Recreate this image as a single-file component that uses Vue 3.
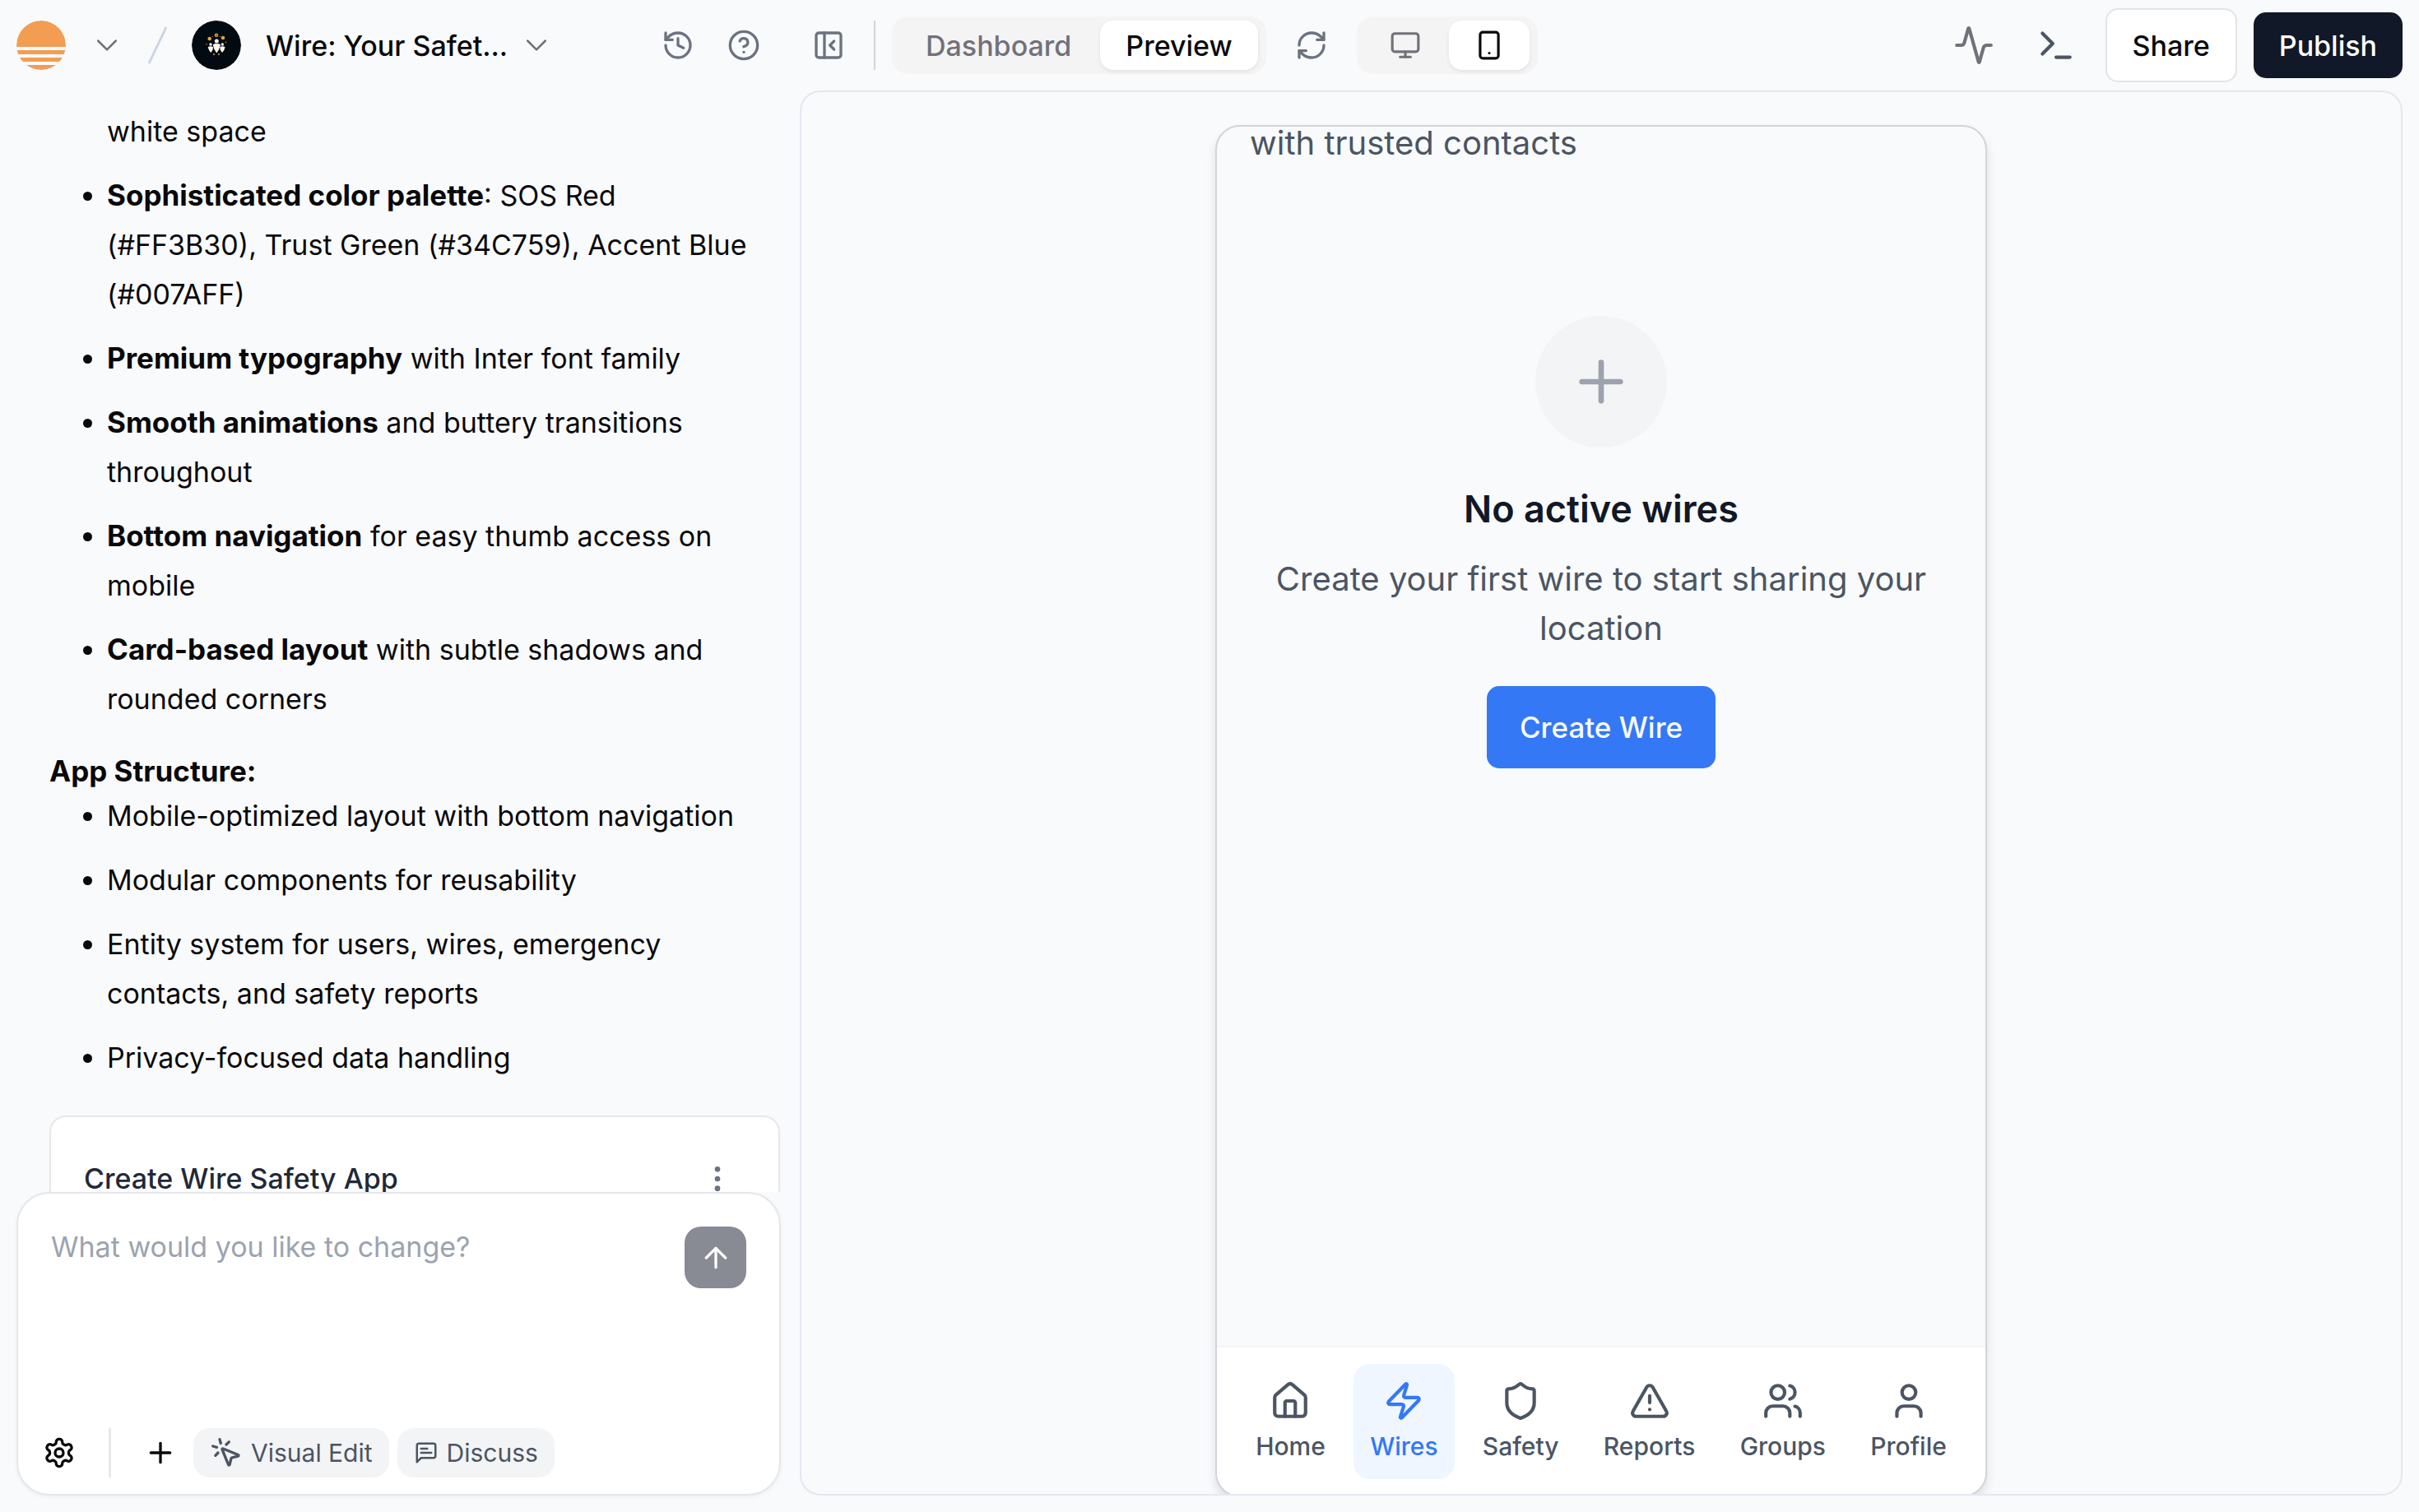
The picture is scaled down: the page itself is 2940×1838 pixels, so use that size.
<script setup>
const features = [
  { title: 'Sophisticated color palette', text: ': SOS Red (#FF3B30), Trust Green (#34C759), Accent Blue (#007AFF)' },
  { title: 'Premium typography', text: ' with Inter font family' },
  { title: 'Smooth animations', text: ' and buttery transitions throughout' },
  { title: 'Bottom navigation', text: ' for easy thumb access on mobile' },
  { title: 'Card-based layout', text: ' with subtle shadows and rounded corners' },
]

const structure = [
  'Mobile-optimized layout with bottom navigation',
  'Modular components for reusability',
  'Entity system for users, wires, emergency contacts, and safety reports',
  'Privacy-focused data handling',
]

const tabs = [
  {
    label: 'Home',
    paths: [
      'M15 21v-8a1 1 0 0 0-1-1h-4a1 1 0 0 0-1 1v8',
      'M3 10a2 2 0 0 1 .709-1.528l7-5.999a2 2 0 0 1 2.582 0l7 5.999A2 2 0 0 1 21 10v9a2 2 0 0 1-2 2H5a2 2 0 0 1-2-2z',
    ],
  },
  {
    label: 'Wires',
    active: true,
    paths: [
      'M4 14a1 1 0 0 1-.78-1.63l9.9-10.2a.5.5 0 0 1 .86.46l-1.92 6.02A1 1 0 0 0 13 10h7a1 1 0 0 1 .78 1.63l-9.9 10.2a.5.5 0 0 1-.86-.46l1.92-6.02A1 1 0 0 0 11 14z',
    ],
  },
  {
    label: 'Safety',
    paths: [
      'M20 13c0 5-3.5 7.5-7.66 8.95a1 1 0 0 1-.67-.01C7.5 20.5 4 18 4 13V6a1 1 0 0 1 1-1c2 0 4.5-1.2 6.24-2.72a1.17 1.17 0 0 1 1.52 0C14.51 3.81 17 5 19 5a1 1 0 0 1 1 1z',
    ],
  },
  {
    label: 'Reports',
    paths: [
      'm21.73 18-8-14a2 2 0 0 0-3.48 0l-8 14A2 2 0 0 0 4 21h16a2 2 0 0 0 1.73-3',
      'M12 9v4',
      'M12 17h.01',
    ],
  },
  {
    label: 'Groups',
    paths: [
      'M16 21v-2a4 4 0 0 0-4-4H6a4 4 0 0 0-4 4v2',
      'M13 7a4 4 0 1 1-8 0 4 4 0 0 1 8 0',
      'M22 21v-2a4 4 0 0 0-3-3.87',
      'M16 3.13a4 4 0 0 1 0 7.75',
    ],
  },
  {
    label: 'Profile',
    paths: ['M19 21v-2a4 4 0 0 0-4-4H9a4 4 0 0 0-4 4v2', 'M16 7a4 4 0 1 1-8 0 4 4 0 0 1 8 0'],
  },
]
</script>

<template>
  <div class="app">
    <aside class="sidebar">
      <header class="sidebar-head">
        <button class="plain" aria-label="Workspace">
          <svg class="logo" viewBox="0 0 60 60">
            <circle cx="30" cy="30" r="30" fill="#f29d52" />
            <rect x="0" y="32" width="60" height="4" fill="#f9fafc" />
            <rect x="0" y="41" width="60" height="4" fill="#f9fafc" />
            <rect x="0" y="50" width="60" height="4" fill="#f9fafc" />
          </svg>
        </button>
        <button class="plain" aria-label="Switch workspace">
          <svg class="icon" viewBox="0 0 24 24"><path d="M5.5 8.7 12 15.2l6.5-6.5" /></svg>
        </button>
        <svg class="slash" viewBox="0 0 24 48"><path d="M1 47 23 1" /></svg>
        <svg class="avatar" viewBox="0 0 60 60">
          <circle cx="30" cy="30" r="30" fill="#020b12" />
          <circle cx="30" cy="17.7" r="1.5" fill="none" stroke="#e8a13c" stroke-width="1.5" />
          <g fill="#e8a13c">
            <circle cx="21.7" cy="22" r="2.3" />
            <circle cx="38" cy="21" r="2.3" />
            <circle cx="27" cy="41" r="1" />
            <circle cx="33" cy="41" r="1" />
            <circle cx="18" cy="28.7" r=".7" />
            <circle cx="41.7" cy="26.3" r=".7" />
            <circle cx="25.5" cy="19.5" r=".6" />
            <circle cx="34.5" cy="19.5" r=".6" />
          </g>
          <g fill="#fdf8ee">
            <circle cx="30.3" cy="25" r="2.5" />
            <path d="M25.7 29.5q2.3-2 4.6-1.3 2.3-.7 4.7 1.3l-1.8 5.5-2.9 4.5-2.9-4.5z" />
            <circle cx="23" cy="29" r="1.7" />
            <path d="M19.7 32.3q3.3-2 6.3 0l-.5 3.5-2.2 3.2-2.3-3z" />
            <circle cx="37.3" cy="29" r="1.7" />
            <path d="M34.3 32.3q3-2 6.3 0l-1.3 3.7-2.3 3-2.2-3.2z" />
          </g>
        </svg>
        <button class="plain title">
          Wire: Your Safet...
          <svg class="icon title-chevron" viewBox="0 0 24 24"><path d="M5.5 8.7 12 15.2l6.5-6.5" /></svg>
        </button>
        <div class="head-actions">
          <button class="plain" aria-label="History">
            <svg class="icon" viewBox="0 0 24 24">
              <path d="M3 12a9 9 0 1 0 9-9 9.75 9.75 0 0 0-6.74 2.74L3 8" />
              <path d="M3 3v5h5" />
              <path d="M12 7v5l4 2" />
            </svg>
          </button>
          <button class="plain" aria-label="Help">
            <svg class="icon" viewBox="0 0 24 24">
              <circle cx="12" cy="12" r="10" />
              <path d="M9.09 9a3 3 0 0 1 5.83 1c0 2-3 3-3 3" />
              <path d="M12 17h.01" />
            </svg>
          </button>
        </div>
      </header>

      <section class="chat">
        <ul>
          <li class="continued">white space</li>
          <li v-for="f in features" :key="f.title"><strong>{{ f.title }}</strong>{{ f.text }}</li>
        </ul>
        <p class="chat-heading">App Structure:</p>
        <ul>
          <li v-for="s in structure" :key="s">{{ s }}</li>
        </ul>
        <article class="card">
          <h2>Create Wire Safety App</h2>
          <button class="plain" aria-label="More options">
            <svg class="icon dots" viewBox="0 0 24 24">
              <circle cx="12" cy="12" r="1" />
              <circle cx="12" cy="5" r="1" />
              <circle cx="12" cy="19" r="1" />
            </svg>
          </button>
        </article>
      </section>

      <form class="composer" @submit.prevent>
        <div class="composer-input">
          <textarea aria-label="Message" placeholder="What would you like to change?"></textarea>
          <button class="send" aria-label="Send">
            <svg class="icon" viewBox="0 0 24 24"><path d="m5 12 7-7 7 7" /><path d="M12 19V5" /></svg>
          </button>
        </div>
        <div class="composer-tools">
          <button class="plain" type="button" aria-label="Settings">
            <svg class="icon dark" viewBox="0 0 24 24">
              <path d="M12.22 2h-.44a2 2 0 0 0-2 2v.18a2 2 0 0 1-1 1.73l-.43.25a2 2 0 0 1-2 0l-.15-.08a2 2 0 0 0-2.73.73l-.22.38a2 2 0 0 0 .73 2.73l.15.1a2 2 0 0 1 1 1.72v.51a2 2 0 0 1-1 1.74l-.15.09a2 2 0 0 0-.73 2.73l.22.38a2 2 0 0 0 2.73.73l.15-.08a2 2 0 0 1 2 0l.43.25a2 2 0 0 1 1 1.73V20a2 2 0 0 0 2 2h.44a2 2 0 0 0 2-2v-.18a2 2 0 0 1 1-1.73l.43-.25a2 2 0 0 1 2 0l.15.08a2 2 0 0 0 2.73-.73l.22-.39a2 2 0 0 0-.73-2.73l-.15-.08a2 2 0 0 1-1-1.74v-.5a2 2 0 0 1 1-1.74l.15-.09a2 2 0 0 0 .73-2.73l-.22-.38a2 2 0 0 0-2.73-.73l-.15.08a2 2 0 0 1-2 0l-.43-.25a2 2 0 0 1-1-1.73V4a2 2 0 0 0-2-2z" />
              <circle cx="12" cy="12" r="3" />
            </svg>
          </button>
          <span class="tools-divider"></span>
          <button class="plain" type="button" aria-label="Add">
            <svg class="icon dark" viewBox="0 0 24 24"><path d="M5 12h14" /><path d="M12 5v14" /></svg>
          </button>
          <div class="chips">
            <button class="chip" type="button">
              <svg class="icon" viewBox="0 0 24 24">
                <path d="M14 4.1 12 6" />
                <path d="m5.1 8-2.9-.8" />
                <path d="m6 12-1.9 2" />
                <path d="M7.2 2.2 8 5.1" />
                <path d="M9.037 9.69a.498.498 0 0 1 .653-.653l11 4.5a.5.5 0 0 1-.074.949l-4.349 1.041a1 1 0 0 0-.74.739l-1.04 4.35a.5.5 0 0 1-.95.074z" />
              </svg>
              Visual Edit
            </button>
            <button class="chip" type="button">
              <svg class="icon small" viewBox="0 0 24 24">
                <path d="M21 15a2 2 0 0 1-2 2H7l-4 4V5a2 2 0 0 1 2-2h14a2 2 0 0 1 2 2z" />
                <path d="M13 8H7" />
                <path d="M17 12H7" />
              </svg>
              Discuss
            </button>
          </div>
        </div>
      </form>
    </aside>

    <main class="workspace">
      <header class="toolbar">
        <button class="plain" aria-label="Collapse sidebar">
          <svg class="icon" viewBox="0 0 24 24">
            <rect x="3" y="3" width="18" height="18" rx="2" />
            <path d="M9 3v18" />
            <path d="m16 15-3-3 3-3" />
          </svg>
        </button>
        <span class="bar-divider"></span>
        <div class="segment">
          <button class="segment-item">Dashboard</button>
          <button class="segment-item active">Preview</button>
        </div>
        <button class="plain refresh" aria-label="Refresh">
          <svg class="icon" viewBox="0 0 24 24">
            <path d="M3 12a9 9 0 0 1 9-9 9.75 9.75 0 0 1 6.74 2.74L21 8" />
            <path d="M21 3v5h-5" />
            <path d="M21 12a9 9 0 0 1-9 9 9.75 9.75 0 0 1-6.74-2.74L3 16" />
            <path d="M8 16H3v5" />
          </svg>
        </button>
        <div class="segment">
          <button class="segment-item device-item" aria-label="Desktop view">
            <svg class="icon device" viewBox="0 0 24 24">
              <rect x="2" y="3" width="20" height="14" rx="2" />
              <path d="M8 21h8" />
              <path d="M12 17v4" />
            </svg>
          </button>
          <button class="segment-item device-item active" aria-label="Mobile view">
            <svg class="icon device" viewBox="0 0 24 24">
              <rect x="5" y="2" width="14" height="20" rx="2" />
              <path d="M12 18h.01" />
            </svg>
          </button>
        </div>
        <div class="toolbar-end">
          <button class="plain" aria-label="Activity">
            <svg class="icon large zinc" viewBox="0 0 24 24">
              <path d="M22 12h-2.48a2 2 0 0 0-1.93 1.46l-2.35 8.36a.25.25 0 0 1-.48 0L9.24 2.18a.25.25 0 0 0-.48 0l-2.35 8.36A2 2 0 0 1 4.49 12H2" />
            </svg>
          </button>
          <button class="plain terminal" aria-label="Console">
            <svg class="icon large slate" viewBox="0 0 24 24"><path d="m4 17 6-6-6-6" /><path d="M12 19h8" /></svg>
          </button>
          <button class="share">Share</button>
          <button class="publish">Publish</button>
        </div>
      </header>

      <section class="stage">
        <div class="phone">
          <div class="phone-body">
            <p class="phone-sub">with trusted contacts</p>
            <div class="empty">
              <span class="empty-badge">
                <svg class="icon" viewBox="0 0 24 24"><path d="M5 12h14" /><path d="M12 5v14" /></svg>
              </span>
              <h3>No active wires</h3>
              <p>Create your first wire to start sharing your location</p>
              <button class="create">Create Wire</button>
            </div>
          </div>
          <nav class="tabs">
            <a v-for="t in tabs" :key="t.label" href="#" class="tab" :class="{ active: t.active }">
              <svg class="icon large" viewBox="0 0 24 24">
                <path v-for="d in t.paths" :key="d" :d="d" />
              </svg>
              {{ t.label }}
            </a>
          </nav>
        </div>
      </section>
    </main>
  </div>
</template>

<style>
body {
  margin: 0;
  background: #f9fafc;
}
</style>

<style scoped>
.app,
.app * {
  box-sizing: border-box;
}

.app {
  display: flex;
  height: 100vh;
  overflow: hidden;
  background: #f9fafc;
  color: #09090b;
  font-family: Inter, "Liberation Sans", sans-serif;
  font-size: 34px;
}

button,
textarea {
  font: inherit;
  color: inherit;
  border: 0;
  padding: 0;
  background: none;
}

h2,
h3,
p,
ul {
  margin: 0;
  padding: 0;
}

.plain {
  display: flex;
  align-items: center;
  color: #6b7280;
}

.icon {
  display: block;
  flex: none;
  width: 40px;
  height: 40px;
  fill: none;
  stroke: currentColor;
  stroke-width: 2;
  stroke-linecap: round;
  stroke-linejoin: round;
}

.icon.small {
  width: 30px;
  height: 30px;
}

.icon.device {
  width: 38px;
  height: 38px;
}

.icon.large {
  width: 50px;
  height: 50px;
}

.icon.dark {
  color: #09090b;
}

.icon.zinc {
  color: #71717a;
}

.icon.slate {
  color: #4b5563;
}

/* Sidebar */
.sidebar {
  display: flex;
  flex-direction: column;
  flex: 0 0 972px;
  min-width: 0;
}

.sidebar-head {
  display: flex;
  flex: none;
  align-items: center;
  gap: 30px;
  height: 110px;
  padding: 0 48px 0 20px;
}

.sidebar-head > .plain > .icon,
.title-chevron {
  color: #71717a;
  stroke-width: 1.5;
}

.logo,
.avatar {
  display: block;
  width: 60px;
  height: 60px;
  border-radius: 50%;
}

.slash {
  width: 23px;
  height: 48px;
  fill: none;
  stroke: #cbd5e1;
  stroke-width: 3;
}

.title {
  gap: 15px;
  color: #09090b;
  font-weight: 500;
  white-space: nowrap;
}

.head-actions {
  display: flex;
  gap: 40px;
  margin-left: auto;
}

.chat {
  flex: 1;
  min-height: 0;
  overflow: hidden;
  padding: 20px 24px 0 60px;
}

.chat ul {
  padding: 0 20px 0 70px;
  list-style: disc;
}

.chat li {
  line-height: 60px;
}

.chat li + li {
  margin-top: 18px;
}

.chat .continued {
  list-style: none;
}

.chat strong,
.chat-heading {
  font-size: 35px;
  font-weight: 700;
  line-height: 50px;
}

.chat-heading {
  margin-top: 32px;
}

.card {
  display: flex;
  align-items: center;
  justify-content: space-between;
  margin-top: 40px;
  padding: 50px 54px 50px 40px;
  border: 2px solid #e5e7eb;
  border-radius: 20px;
  background: #fff;
}

.card h2 {
  color: #1f2937;
  font-size: 34px;
  font-weight: 500;
  line-height: 50px;
}

.dots {
  fill: currentColor;
}

.composer {
  display: flex;
  flex: none;
  flex-direction: column;
  height: 369px;
  margin: 0 23px 20px 20px;
  padding: 40px 40px 20px;
  border: 2px solid #e5e7eb;
  border-radius: 40px;
  background: #fff;
  box-shadow: 0 2px 5px rgba(0, 0, 0, 0.05);
}

.composer-input {
  display: flex;
  flex: 1;
  align-items: flex-start;
}

.composer textarea {
  flex: 1;
  height: 200px;
  line-height: 50px;
  resize: none;
  outline: none;
}

.composer textarea::placeholder {
  color: #9ca3af;
  opacity: 1;
}

.send {
  display: flex;
  align-items: center;
  justify-content: center;
  width: 75px;
  height: 75px;
  border-radius: 20px;
  background: #888b93;
  color: #fff;
}

.composer-tools {
  display: flex;
  align-items: center;
  margin-left: -10px;
}

.tools-divider {
  width: 3px;
  height: 60px;
  margin: 0 40px;
  background: #e5e7eb;
}

.chips {
  display: flex;
  gap: 10px;
  margin-left: 20px;
}

.chip {
  display: flex;
  align-items: center;
  gap: 10px;
  height: 60px;
  padding: 0 20px;
  border-radius: 20px;
  background: #f3f4f6;
  color: #4b5563;
  font-size: 30px;
}

/* Workspace */
.workspace {
  display: flex;
  flex: 1;
  flex-direction: column;
  min-width: 0;
  padding-right: 20px;
}

.toolbar {
  display: flex;
  flex: none;
  align-items: center;
  height: 110px;
  padding-left: 15px;
}

.bar-divider {
  width: 2px;
  height: 60px;
  margin: 0 20px 0 35px;
  background: #d1d5db;
}

.segment {
  display: flex;
  gap: 4px;
  padding: 5px 10px;
  border-radius: 20px;
  background: #f4f4f5;
}

.segment-item {
  height: 60px;
  padding: 0 31px;
  border-radius: 16px;
  color: #71717a;
  font-weight: 500;
}

.segment-item.device-item {
  padding: 0 30px;
}

.segment-item.active {
  background: #fff;
  color: #09090b;
  box-shadow: 0 2px 5px rgba(0, 0, 0, 0.08);
}

.refresh {
  margin: 0 35px;
}

.toolbar-end {
  display: flex;
  align-items: center;
  margin-left: auto;
}

.terminal {
  margin: 0 35px 0 50px;
}

.share,
.publish {
  height: 80px;
  padding: 0 31px;
  border-radius: 15px;
  font-weight: 500;
}

.share {
  height: 90px;
  border: 2px solid #e4e4e7;
  background: #fff;
}

.publish {
  margin-left: 20px;
  background: #111827;
  color: #fff;
}

.stage {
  display: flex;
  flex: 1;
  justify-content: center;
  align-items: flex-start;
  min-height: 0;
  margin-bottom: 20px;
  padding-top: 40px;
  overflow: hidden;
  border: 2px solid #e2e8f0;
  border-radius: 25px;
}

.phone {
  display: flex;
  flex: none;
  flex-direction: column;
  width: 938px;
  height: 1668px;
  overflow: hidden;
  border: 2px solid #d1d5db;
  border-radius: 30px;
  background: #f9fafb;
  box-shadow: 0 10px 15px rgba(0, 0, 0, 0.07), 0 4px 10px rgba(0, 0, 0, 0.05);
}

.phone-body {
  flex: 1;
  padding: 0 40px;
  color: #4b5563;
  font-size: 40px;
}

.phone-sub {
  line-height: 40px;
}

.empty {
  display: flex;
  flex-direction: column;
  align-items: center;
  margin-top: 190px;
  text-align: center;
}

.empty-badge {
  display: flex;
  align-items: center;
  justify-content: center;
  width: 160px;
  height: 160px;
  border-radius: 50%;
  background: #f3f4f6;
  color: #9ca3af;
}

.empty-badge .icon {
  width: 80px;
  height: 80px;
}

.empty h3 {
  margin: 40px 0 20px;
  color: #111827;
  font-size: 45px;
  font-weight: 600;
  line-height: 70px;
}

.empty p {
  line-height: 60px;
}

.create {
  height: 100px;
  margin-top: 40px;
  padding: 0 40px;
  border-radius: 15px;
  background: #3478f6;
  color: #f8fafc;
  font-size: 35px;
  font-weight: 500;
}

.tabs {
  display: flex;
  justify-content: space-around;
  padding: 20px;
  border-top: 2px solid #f3f4f6;
  background: #fff;
}

.tab {
  display: flex;
  flex-direction: column;
  align-items: center;
  gap: 10px;
  padding: 20px;
  border-radius: 20px;
  color: #4b5563;
  font-size: 30px;
  font-weight: 500;
  line-height: 40px;
  text-decoration: none;
}

.tab.active {
  background: #eff6ff;
  color: #3478f6;
}
</style>
